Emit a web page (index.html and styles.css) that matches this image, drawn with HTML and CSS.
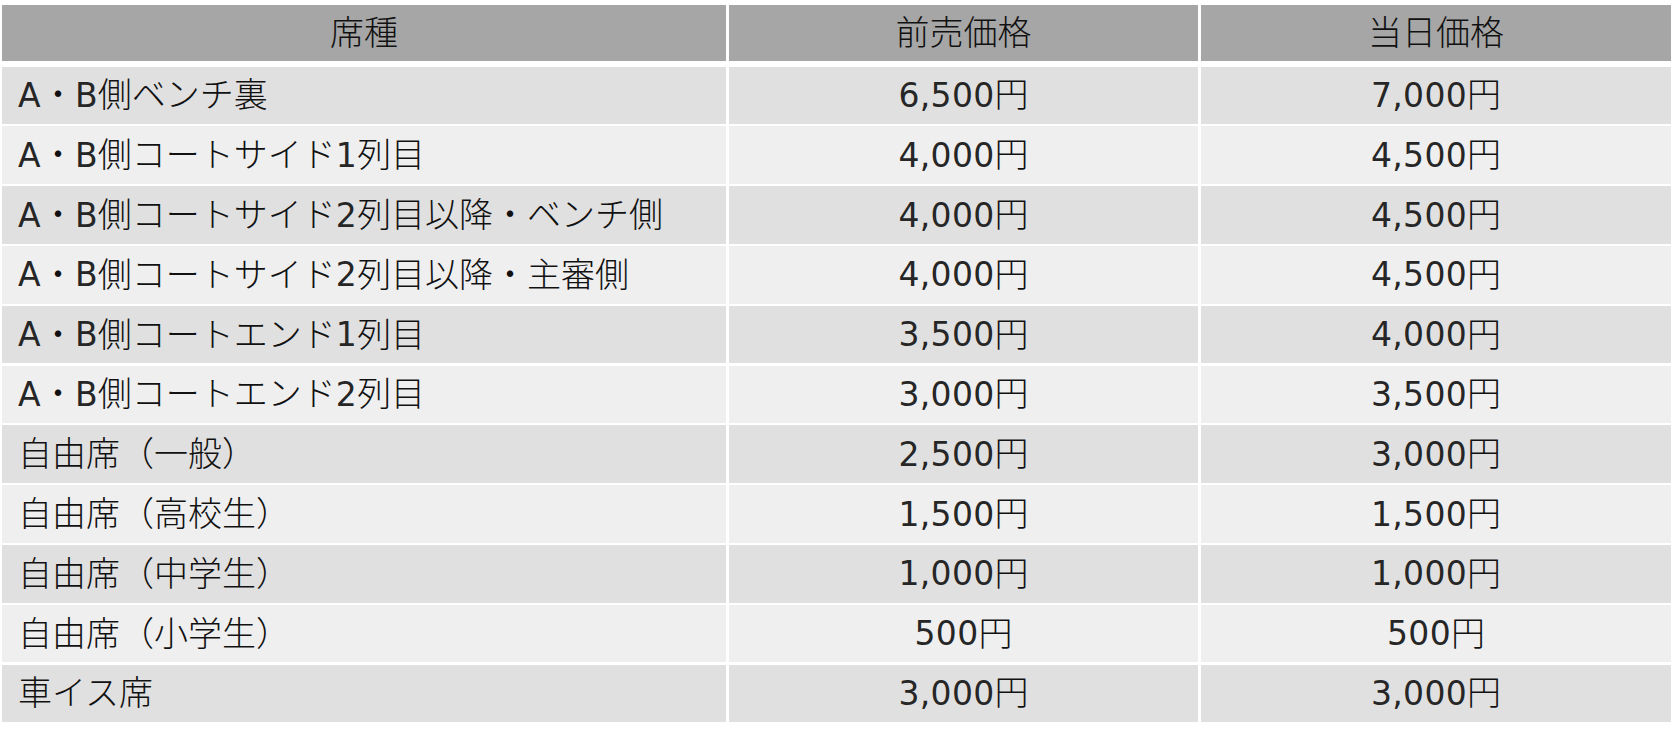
FILE: index.html
```html
<!DOCTYPE html>
<html lang="ja">
<head>
<meta charset="utf-8">
<title>料金表</title>
<link rel="stylesheet" href="styles.css">
</head>
<body>
<div class="price-table" role="table">
  <div class="cell head" role="columnheader">席種</div>
  <div class="cell head" role="columnheader">前売価格</div>
  <div class="cell head" role="columnheader">当日価格</div>

  <div class="cell name dark"><span class="lat">A</span>・<span class="lat">B</span>側ベンチ裏</div>
  <div class="cell price dark"><span class="lat">6,500</span>円</div>
  <div class="cell price dark"><span class="lat">7,000</span>円</div>

  <div class="cell name light"><span class="lat">A</span>・<span class="lat">B</span>側コートサイド<span class="lat">1</span>列目</div>
  <div class="cell price light"><span class="lat">4,000</span>円</div>
  <div class="cell price light"><span class="lat">4,500</span>円</div>

  <div class="cell name dark"><span class="lat">A</span>・<span class="lat">B</span>側コートサイド<span class="lat">2</span>列目以降・ベンチ側</div>
  <div class="cell price dark"><span class="lat">4,000</span>円</div>
  <div class="cell price dark"><span class="lat">4,500</span>円</div>

  <div class="cell name light"><span class="lat">A</span>・<span class="lat">B</span>側コートサイド<span class="lat">2</span>列目以降・主審側</div>
  <div class="cell price light"><span class="lat">4,000</span>円</div>
  <div class="cell price light"><span class="lat">4,500</span>円</div>

  <div class="cell name dark"><span class="lat">A</span>・<span class="lat">B</span>側コートエンド<span class="lat">1</span>列目</div>
  <div class="cell price dark"><span class="lat">3,500</span>円</div>
  <div class="cell price dark"><span class="lat">4,000</span>円</div>

  <div class="cell name light"><span class="lat">A</span>・<span class="lat">B</span>側コートエンド<span class="lat">2</span>列目</div>
  <div class="cell price light"><span class="lat">3,000</span>円</div>
  <div class="cell price light"><span class="lat">3,500</span>円</div>

  <div class="cell name dark">自由席（一般）</div>
  <div class="cell price dark"><span class="lat">2,500</span>円</div>
  <div class="cell price dark"><span class="lat">3,000</span>円</div>

  <div class="cell name light">自由席（高校生）</div>
  <div class="cell price light"><span class="lat">1,500</span>円</div>
  <div class="cell price light"><span class="lat">1,500</span>円</div>

  <div class="cell name dark">自由席（中学生）</div>
  <div class="cell price dark"><span class="lat">1,000</span>円</div>
  <div class="cell price dark"><span class="lat">1,000</span>円</div>

  <div class="cell name light">自由席（小学生）</div>
  <div class="cell price light"><span class="lat">500</span>円</div>
  <div class="cell price light"><span class="lat">500</span>円</div>

  <div class="cell name dark">車イス席</div>
  <div class="cell price dark"><span class="lat">3,000</span>円</div>
  <div class="cell price dark"><span class="lat">3,000</span>円</div>
</div>
</body>
</html>
```
FILE: styles.css
```css
html, body {
  margin: 0;
  padding: 0;
  background: #ffffff;
}

body {
  font-family: "DejaVu Sans", "Noto Sans CJK JP", sans-serif;
  font-weight: 300;
  color: #111111;
}

.price-table {
  display: grid;
  grid-template-columns: 724px 469px 470px;
  column-gap: 3px;
  row-gap: 2.3px;
  margin: 5px 0 0 2px;
  width: max-content;
}

.cell {
  display: flex;
  align-items: center;
  height: 57.5px;
  font-size: 34px;
  line-height: 1;
  white-space: nowrap;
}

.lat {
  font-family: "DejaVu Sans", sans-serif;
  font-weight: 400;
  font-size: 33px;
  letter-spacing: 0.3px;
  color: #262626;
}

.head {
  height: 56px;
  margin-bottom: 3.4px;
  justify-content: center;
  background: #a6a6a6;
}

.name {
  padding-left: 16px;
}

.price {
  justify-content: center;
}

.dark {
  background: #e0e0e0;
}

.light {
  background: #efefef;
}
```
